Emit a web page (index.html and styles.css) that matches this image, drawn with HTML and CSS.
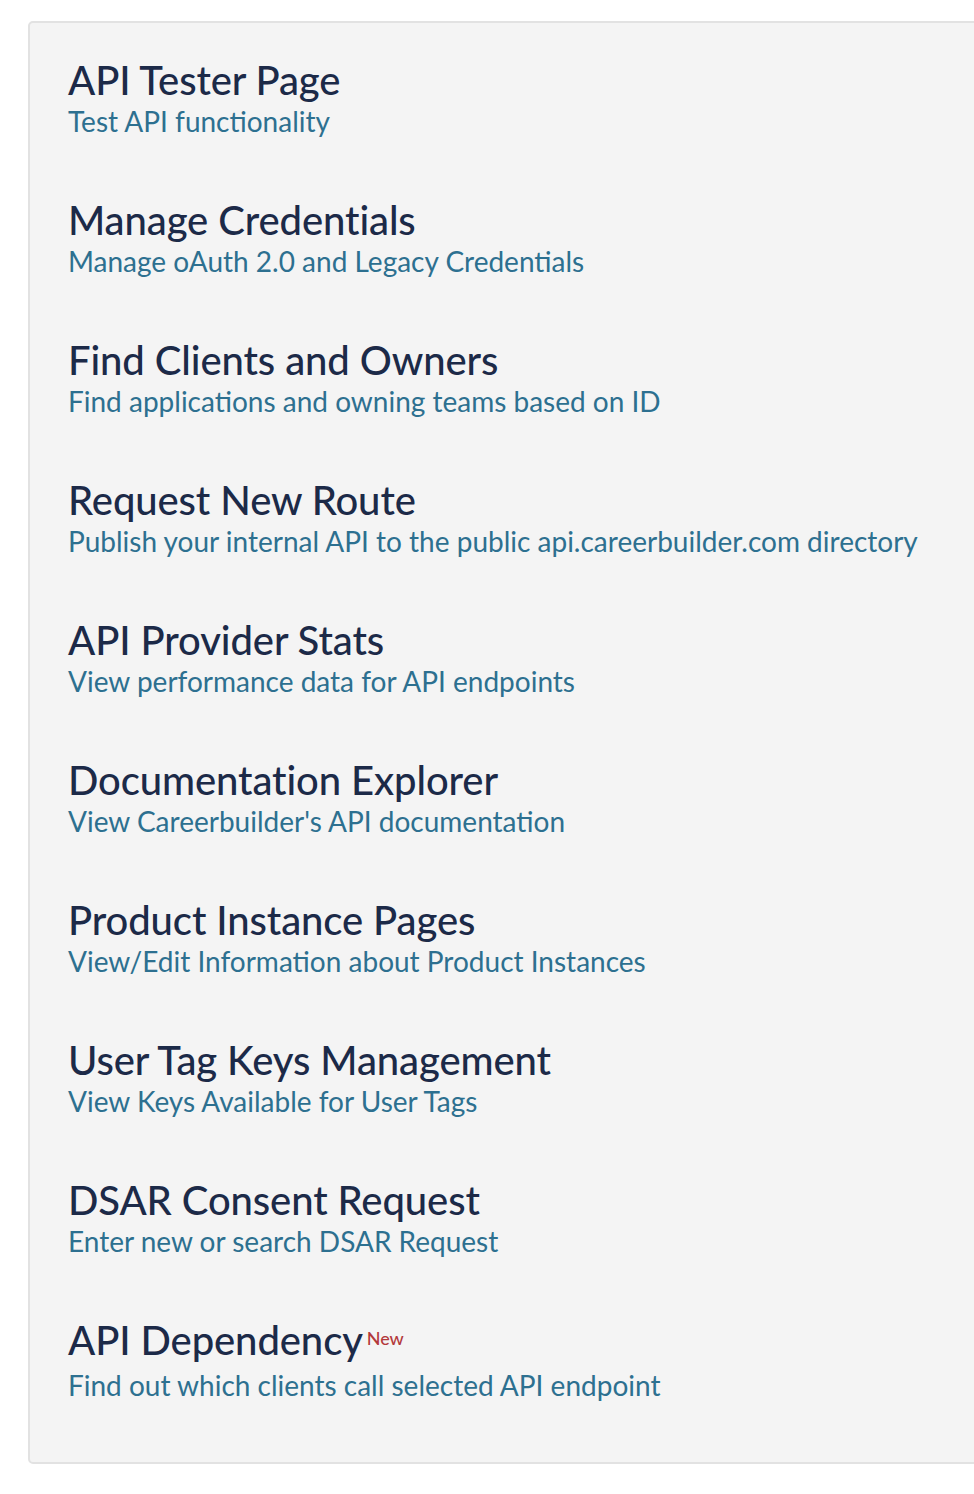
FILE: index.html
```html
<!DOCTYPE html>
<html lang="en">
<head>
<meta charset="utf-8">
<title>Tools</title>
<link rel="stylesheet" href="styles.css">
</head>
<body>
<div class="page">
  <div class="card">
    <a class="item" href="#">
      <div class="title">API Tester Page</div>
      <div class="desc">Test API functionality</div>
    </a>
    <a class="item" href="#">
      <div class="title">Manage Credentials</div>
      <div class="desc">Manage oAuth 2.0 and Legacy Credentials</div>
    </a>
    <a class="item" href="#">
      <div class="title">Find Clients and Owners</div>
      <div class="desc">Find applications and owning teams based on ID</div>
    </a>
    <a class="item" href="#">
      <div class="title">Request New Route</div>
      <div class="desc">Publish your internal API to the public api.careerbuilder.com directory</div>
    </a>
    <a class="item" href="#">
      <div class="title">API Provider Stats</div>
      <div class="desc">View performance data for API endpoints</div>
    </a>
    <a class="item" href="#">
      <div class="title">Documentation Explorer</div>
      <div class="desc">View Careerbuilder's API documentation</div>
    </a>
    <a class="item" href="#">
      <div class="title">Product Instance Pages</div>
      <div class="desc">View/Edit Information about Product Instances</div>
    </a>
    <a class="item" href="#">
      <div class="title">User Tag Keys Management</div>
      <div class="desc">View Keys Available for User Tags</div>
    </a>
    <a class="item" href="#">
      <div class="title">DSAR Consent Request</div>
      <div class="desc">Enter new or search DSAR Request</div>
    </a>
    <a class="item" href="#">
      <div class="title">API Dependency<span class="badge-new">New</span></div>
      <div class="desc desc-shifted">Find out which clients call selected API endpoint</div>
    </a>
  </div>
</div>
</body>
</html>
```

FILE: styles.css
```css
html, body {
  margin: 0;
  padding: 0;
  overflow: hidden;
  background: #ffffff;
}

body {
  font-family: Lato, "Open Sans", sans-serif;
}

.page {
  padding: 21px 0 0 28px;
}

.card {
  width: 1000px;
  background: #f4f4f4;
  border: 2px solid #e2e2e2;
  border-radius: 5px;
  padding: 34px 0 60px 38px;
  box-sizing: border-box;
  display: flex;
  flex-direction: column;
  gap: 59px;
}

.item {
  display: block;
  text-decoration: none;
}

.title {
  font-size: 40px;
  line-height: 47px;
  color: #1c2a48;
  font-weight: 500;
  letter-spacing: -0.1px;
}

.desc {
  font-size: 28px;
  line-height: 34px;
  color: #2d7090;
}

.desc-shifted {
  margin-top: 4px;
}

.badge-new {
  font-size: 18px;
  line-height: 0;
  color: #b3393b;
  margin-left: 4px;
  vertical-align: 10px;
}
```
